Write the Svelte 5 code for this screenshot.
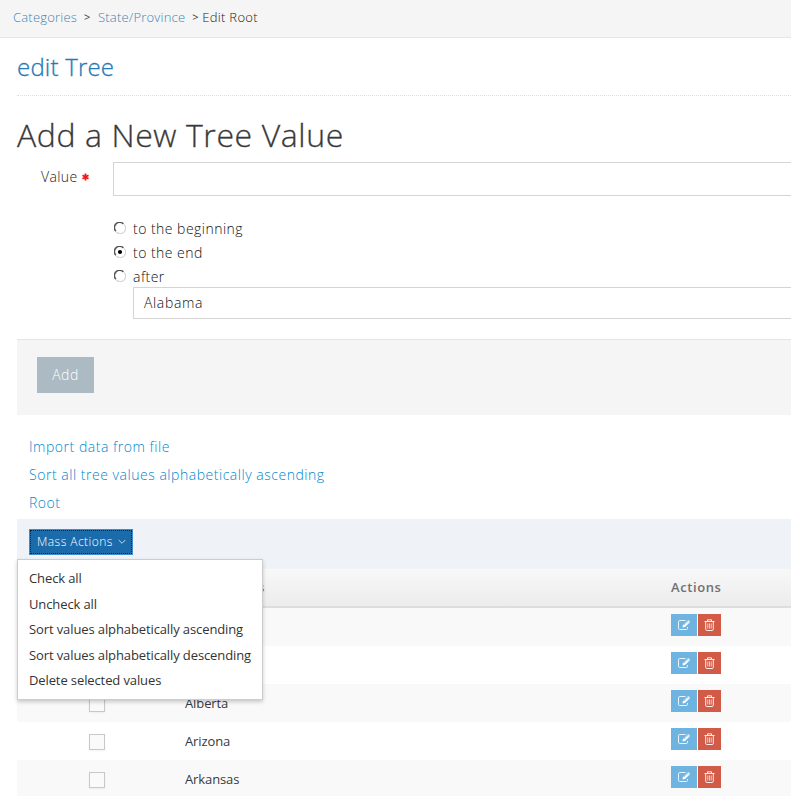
<script>
  const links = ['Import data from file', 'Sort all tree values alphabetically ascending', 'Root'];
  const menu = [
    'Check all',
    'Uncheck all',
    'Sort values alphabetically ascending',
    'Sort values alphabetically descending',
    'Delete selected values'
  ];
  const rows = ['', '', 'Alberta', 'Arizona', 'Arkansas'];
  const positions = ['to the beginning', 'to the end', 'after'];
  let selected = $state(1);
  let open = $state(true);
</script>

<div class="page">
  <nav class="crumbs">
    <a href="#categories">Categories</a><span class="sep">&gt;</span><a class="second" href="#state">State/Province</a><span class="sep last">&gt;</span><span class="current">Edit Root</span>
  </nav>

  <main>
    <h2>edit Tree</h2>
    <h1>Add a New Tree Value</h1>

    <form>
      <div class="field">
        <label for="value">Value
          <svg class="star" width="7" height="8" viewBox="0 0 7 8"><path d="M3.5 .4v7.2M.5 2.2l6 3.6M6.5 2.2l-6 3.6" stroke="#f41616" stroke-width="1.8" /></svg>
        </label>
        <input id="value" type="text" />
      </div>
      <div class="options">
        {#each positions as label, i}
          <label class="option">
            <input type="radio" name="position" checked={selected === i} onchange={() => (selected = i)} />
            <svg width="12" height="12" viewBox="0 0 12 12" fill="none">
              <circle cx="6" cy="6" r="5" fill="#fff" />
              <path d="M1.9 9.3A5.2 5.2 0 0 1 9.4 1.9" stroke="#555" stroke-width="1.5" />
              <path d="M2.3 10A5.3 5.3 0 0 0 10.1 2.4" stroke="#d8d5cf" stroke-width="1.1" />
              {#if selected === i}<circle cx="6" cy="6" r="2.1" fill="#000" />{/if}
            </svg>
            <span>{label}</span>
          </label>
        {/each}
        <div class="select">Alabama</div>
      </div>
      <div class="footer"><button type="button" class="add">Add</button></div>
    </form>

    <div class="links">
      {#each links as link}<a href="#link">{link}</a>{/each}
    </div>

    <div class="toolbar">
      <button class="mass" type="button" onclick={() => (open = !open)}><span>Mass Actions</span>
        <svg width="8" height="6" viewBox="0 0 8 6" fill="none"><path d="M.7 1l3.3 3.3L7.3 1" stroke="#c5dcef" /></svg>
      </button>
      {#if open}
        <ul class="menu">
          {#each menu as item}<li>{item}</li>{/each}
        </ul>
      {/if}
    </div>

    <div class="table">
      <div class="row head"><span class="check"></span><span class="name">Values</span><span class="actions">Actions</span></div>
      {#each rows as row}
        <div class="row">
          <span class="check"><i class="box"></i></span>
          <span class="name">{row}</span>
          <span class="actions">
            <button class="edit" type="button" aria-label="Edit">
              <svg width="14" height="12" viewBox="0 0 14 12" fill="none" stroke="#fff">
                <path d="M8.5 1.5H2.7Q1.5 1.5 1.5 2.7V9.3Q1.5 10.5 2.7 10.5H9.3Q10.5 10.5 10.5 9.3V8" stroke-opacity=".85" />
                <path d="M5.5 8.4L6 6.2 11.2 1 13.2 3 8 8Z" fill="#fff" stroke="none" />
                <path d="M7 6.2L11.2 2.2M10.3 1.8l2 2" stroke="#6fb3e0" stroke-width=".6" />
              </svg>
            </button>
            <button class="delete" type="button" aria-label="Delete">
              <svg width="11" height="12" viewBox="0 0 11 12" fill="none" stroke="#fff">
                <path d="M.5 2.5h10M3.5 2.2V.8h4v1.4M1.7 3v7.3q0 1.2 1 1.2h5.6q1 0 1-1.2V3" stroke-opacity=".9" />
                <path d="M3.8 4.4v5.2M5.5 4.4v5.2M7.2 4.4v5.2" stroke-width=".8" stroke-opacity=".85" />
              </svg>
            </button>
          </span>
        </div>
      {/each}
    </div>
  </main>
</div>

<style>
  :global(body) { margin: 0; background: #fff; }
  .page { height: 796px; overflow: hidden; font: 400 13px/20px "Open Sans", sans-serif; color: #393939; }
  .page * { box-sizing: border-box; }
  a { text-decoration: none; color: #3d85b8; }
  button { font: inherit; border: 0; padding: 0; border-radius: 0; }
  .crumbs { height: 38px; background: #f5f5f5; border-bottom: 1px solid #e5e5e5; padding: 7px 0 0 13px; display: flex; font-size: 13px; font-weight: 300; letter-spacing: .2px; }
  .sep { width: 21px; padding-left: 7px; font-size: 11px; font-weight: 400; }
  .sep.last { width: 17px; }
  .crumbs .current { color: #222; letter-spacing: .3px; }
  main { padding-left: 17px; }
  h2 { margin: 0; height: 58px; border-bottom: 1px dotted #ddd; color: #2679b5; font-size: 24px; line-height: 32px; padding-top: 13px; font-weight: 300; letter-spacing: .2px; -webkit-text-stroke: .3px #2679b5; }
  h1 { margin: 0; height: 66px; padding-top: 19px; font-size: 32px; line-height: 40px; font-weight: 300; letter-spacing: .6px; white-space: nowrap; -webkit-text-stroke: .3px #393939; }
  .field { display: flex; height: 34px; }
  .field label { width: 96px; padding: 5px 0 0 24px; font-size: 14px; font-weight: 300; letter-spacing: .4px; color: #222; white-space: nowrap; }
  .star { margin-left: 0; vertical-align: 1px; }
  .field input { flex: 1; height: 34px; border: 1px solid #d5d5d5; border-right: 0; outline: 0; min-width: 0; }
  .options { padding: 21px 0 0 96px; height: 143px; }
  .option { display: flex; width: 200px; height: 24px; font-size: 14px; line-height: 24px; font-weight: 300; letter-spacing: .47px; align-items: flex-start; }
  .option input { appearance: none; width: 0; height: 0; margin: 0; }
  .option svg { margin: 5px 7px 0 1px; }
  .option span { flex: 1; white-space: nowrap; color: #111; }
  .select { margin: -2px 0 0 20px; height: 32px; border: 1px solid #d5d5d5; border-right: 0; padding-left: 10px; font-size: 14px; line-height: 30px; font-weight: 300; letter-spacing: .65px; color: #111; }
  .footer { height: 76px; background: #f5f5f5; border-top: 1px solid #e5e5e5; padding: 17px 20px; }
  .add { width: 57px; height: 36px; background: #abbac3; color: #fff; font-size: 14px; font-weight: 300; letter-spacing: .5px; }
  .links { display: flex; flex-direction: column; height: 104px; padding: 18px 0 0 12px; font-size: 14px; line-height: 28px; font-weight: 300; letter-spacing: .53px; }
  .links a { color: #0088cc; }
  .toolbar { position: relative; height: 50px; background: #eff3f8; padding: 10px 12px; }
  .mass { width: 104px; height: 26px; display: flex; align-items: center; gap: 5px; padding-left: 7px; background: #1b6aaa; border: 1px solid #428bca; outline: 1px dotted #222; outline-offset: -2px; color: #fff; font-size: 12px; font-weight: 300; letter-spacing: .45px; white-space: nowrap; }
  .menu { position: absolute; z-index: 2; left: 0; top: 40px; width: 246px; height: 141px; margin: 0; padding: 6px 0 0 11px; list-style: none; background: #fff; border: 1px solid #ccc; box-shadow: 0 2px 4px rgba(0, 0, 0, .2); color: #333; }
  .menu li { height: 25.5px; line-height: 24px; white-space: nowrap; font-size: 13px; letter-spacing: -.11px; }
  .row { display: flex; height: 38px; align-items: center; background: #fff; }
  .row:nth-child(even) { background: #f9f9f9; }
  .row.head { height: 39px; background: linear-gradient(#f8f8f8, #ececec); border-bottom: 2px solid #ddd; color: #707070; font-weight: 600; letter-spacing: .6px; }
  .check { width: 168px; padding-left: 72px; }
  .box { display: block; width: 16px; height: 16px; margin-top: 2px; border: 1px solid #c8c8c8; background: #fafafa; box-shadow: 0 1px 2px rgba(0, 0, 0, .05); }
  .name { width: 486px; letter-spacing: -.11px; }
  .head .name { padding: 0 0 2px 37px; letter-spacing: .2px; }
  .actions { display: flex; gap: 1px; align-self: stretch; align-items: center; padding-bottom: 4px; }
  .head .actions { padding-bottom: 2px; }
  .actions button { height: 22px; display: flex; align-items: center; justify-content: center; }
  .edit { width: 26px; background: #6fb3e0; }
  .delete { width: 23px; background: #d15b47; }
</style>
